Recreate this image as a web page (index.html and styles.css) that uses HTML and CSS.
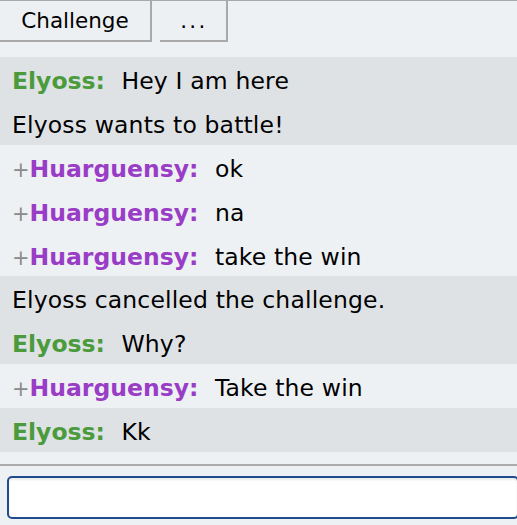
FILE: index.html
```html
<!DOCTYPE html>
<html>
<head>
<meta charset="utf-8">
<link rel="stylesheet" href="styles.css">
</head>
<body>
<div class="page">
  <div class="toolbar">
    <button class="btn btn-challenge">Challenge</button>
    <button class="btn btn-more">...</button>
  </div>
  <div class="chat">
    <div class="row shade"><strong class="name green">Elyoss:</strong> <span class="msg">Hey I am here</span></div>
    <div class="row shade"><span class="msg">Elyoss wants to battle!</span></div>
    <div class="row"><span class="rank">+</span><strong class="name purple">Huarguensy:</strong> <span class="msg">ok</span></div>
    <div class="row"><span class="rank">+</span><strong class="name purple">Huarguensy:</strong> <span class="msg">na</span></div>
    <div class="row"><span class="rank">+</span><strong class="name purple">Huarguensy:</strong> <span class="msg">take the win</span></div>
    <div class="row shade"><span class="msg">Elyoss cancelled the challenge.</span></div>
    <div class="row shade"><strong class="name green">Elyoss:</strong> <span class="msg">Why?</span></div>
    <div class="row"><span class="rank">+</span><strong class="name purple">Huarguensy:</strong> <span class="msg">Take the win</span></div>
    <div class="row shade"><strong class="name green">Elyoss:</strong> <span class="msg">Kk</span></div>
  </div>
  <div class="divider"></div>
  <div class="compose">
    <input class="input" type="text">
  </div>
</div>
</body>
</html>
```

FILE: styles.css
```css
html, body {
  margin: 0;
  padding: 0;
}
body {
  background: #eef1f4;
  font-family: "DejaVu Sans", Verdana, sans-serif;
  width: 517px;
  height: 525px;
  overflow: hidden;
}
.page {
  display: flex;
  flex-direction: column;
}
.toolbar {
  display: flex;
  gap: 8px;
  border-top: 1px solid #a9a9a9;
  height: 41px;
}
.btn {
  font-family: "DejaVu Sans", Verdana, sans-serif;
  font-size: 21.5px;
  color: #000;
  background: #edf0f3;
  border: none;
  border-right: 2px solid #a9a9a9;
  border-bottom: 2px solid #a9a9a9;
  height: 41px;
  padding: 0;
  margin: 0;
  box-sizing: border-box;
}
.btn-challenge {
  width: 152px;
  padding-left: 0;
}
.btn-more {
  width: 68px;
  letter-spacing: 2.4px;
  padding-left: 2px;
}
.chat {
  margin-top: 15px;
  display: flex;
  flex-direction: column;
}
.row {
  height: 43.9px;
  box-sizing: border-box;
  padding: 4px 0 0 12px;
  line-height: 40px;
  font-size: 23.5px;
  color: #000;
  white-space: nowrap;
}
.shade {
  background: #dfe2e5;
}
.name {
  font-weight: bold;
  margin-right: 9px;
}
.msg {
  letter-spacing: 0.15px;
}
.green {
  color: #4b9b3d;
}
.purple {
  color: #9a3dc6;
}
.rank {
  color: #8a8a8a;
  font-size: 21px;
}
.divider {
  margin-top: 12px;
  height: 2px;
  background: #ababab;
}
.compose {
  padding: 10px 0 0 7px;
}
.input {
  display: block;
  width: 512px;
  height: 43px;
  box-sizing: border-box;
  border: 2px solid #214b8c;
  border-radius: 5px;
  background: #fff;
  box-shadow: inset 0 2px 2px rgba(0, 0, 0, 0.08);
  margin: 0;
  padding: 0 8px;
  outline: none;
}
```
